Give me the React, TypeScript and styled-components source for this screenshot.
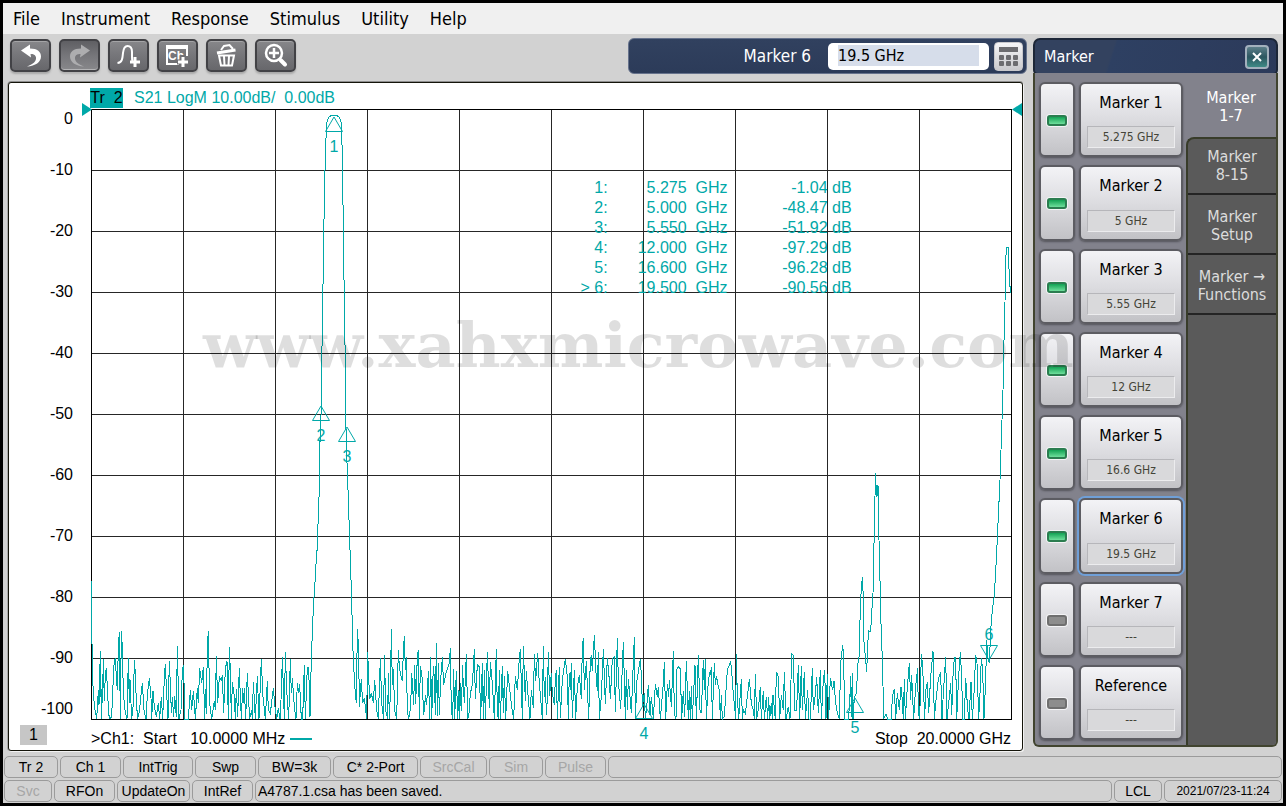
import React from "react";
import styled, { createGlobalStyle, css } from "styled-components";

const UI_FONT = '"DejaVu Sans Condensed", "Noto Sans", sans-serif';
const PLOT_FONT = '"Liberation Sans", Arial, sans-serif';
const TEAL = "#00a8a8";

const GlobalStyle = createGlobalStyle`
  *, *::before, *::after { box-sizing: border-box; }
  body { margin: 0; background: #d2d2d2; }
  button, input { font: inherit; color: inherit; margin: 0; }
`;

const Frame = styled.div`
  position: relative;
  display: flex;
  flex-direction: column;
  min-width: 1000px;
  min-height: 100vh;
  border: 3px solid #000;
  background: #d2d2d2;
  color: #000;
  font: 16px/20px ${UI_FONT};
`;

/* ---------- menu ---------- */

const MenuBar = styled.nav`
  display: flex;
  gap: 21px;
  height: 31px;
  padding: 0 10px;
  background: #f0f0f0;
`;

const MenuItem = styled.button`
  padding: 0;
  border: 0;
  background: none;
  font-size: 18px;
  line-height: 30px;
`;

/* ---------- layout ---------- */

const Main = styled.main`
  flex: 1;
  display: grid;
  grid-template-columns: minmax(0, 1fr) 245px;
  gap: 6px;
  padding: 4px 5px 0;
`;

const Workspace = styled.section`
  display: flex;
  flex-direction: column;
  gap: 8px;
`;

const TopRow = styled.div`
  display: flex;
  justify-content: space-between;
  height: 36px;
`;

const Tools = styled.div`
  display: flex;
  gap: 8px;
  padding: 1px 2px;
`;

const ToolButton = styled.button<{ $pressed?: boolean }>`
  width: 41px;
  height: 33px;
  padding: 0;
  border: 2px solid #424246;
  border-radius: 5px;
  background: linear-gradient(#87878a, #77777b 45%, #67676b);
  box-shadow: inset 0 1px 0 #a4a4a6, 0 2px 2px #a8a8a8;
  color: #fff;
  ${(p) =>
    p.$pressed &&
    css`
      background: linear-gradient(#5f5f63, #76767a 50%, #88888b);
      box-shadow: inset 0 -1px 0 #b4b4b6, 0 2px 2px #b4b4b4;
      color: #adadaf;
    `}
  svg {
    display: block;
    width: 37px;
    height: 29px;
  }
`;

const EntryBar = styled.div`
  display: flex;
  align-items: center;
  justify-content: flex-end;
  gap: 5px;
  width: 399px;
  padding-right: 3px;
  border: 1px solid #66728c;
  border-radius: 6px;
  background: linear-gradient(#31415f, #2c3b59);
  color: #fff;
`;

const EntryLabel = styled.label`
  padding-right: 12px;
  font-size: 17px;
`;

const EntryInput = styled.input`
  width: 161px;
  height: 27px;
  padding: 2px 10px 4px;
  border: 0;
  border-radius: 5px;
  background: linear-gradient(#d6ddea, #d6ddea) content-box, #fff;
  color: #000;
  outline: none;
`;

const KeypadButton = styled.button`
  width: 29px;
  height: 29px;
  padding: 0;
  border: 1px solid #c8c8cc;
  border-radius: 4px;
  background: linear-gradient(#f6f6f8, #c9c9cd);
  svg {
    display: block;
    width: 27px;
    height: 27px;
  }
`;

/* ---------- chart ---------- */

const ChartCard = styled.section`
  flex: 1;
  display: grid;
  grid-template: 26px minmax(0, 1fr) 31px / 82px minmax(0, 1fr) 11px;
  margin-right: 4px;
  border: 1px solid #14140a;
  border-radius: 3px;
  background: #fff;
  box-shadow: 0 -1px 0 #8e8e8e, -1px 0 0 #a8a8a8, 1px 1px 0 #f2f2f2;
  font: 16px/20px ${PLOT_FONT};
`;

const TraceHeader = styled.div`
  grid-column: 2 / 4;
  display: flex;
  align-items: center;
  gap: 11px;
  padding-top: 4px;
  color: ${TEAL};
  white-space: pre;
`;

const TraceTag = styled.span`
  width: 33px;
  margin-left: -1px;
  background: ${TEAL};
  color: #000;
  text-align: center;
`;

const YAxis = styled.div`
  grid-column: 1;
  display: grid;
  grid-template-rows: 1fr repeat(9, 2fr) 1fr;
  align-items: center;
  padding-right: 18px;
  text-align: right;
  span:first-child { align-self: start; }
  span:last-child { align-self: end; }
`;

const Plot = styled.div`
  position: relative;
  min-height: 400px;
`;

const PlotLayer = styled.svg`
  position: absolute;
  inset: 0;
  width: 100%;
  height: 100%;
  overflow: visible;
`;

const LevelArrow = styled.svg<{ $side: "left" | "right" }>`
  position: absolute;
  top: -6px;
  ${(p) => (p.$side === "left" ? "left: -9px;" : "right: -11px;")}
  width: 10px;
  height: 13px;
  fill: ${TEAL};
`;

const Pin = styled.div<{ $x: number; $y: number; $inverted?: boolean }>`
  position: absolute;
  left: ${(p) => (p.$x / 920) * 100}%;
  top: ${(p) => (p.$y / 610) * 100}%;
  display: flex;
  flex-direction: ${(p) => (p.$inverted ? "column-reverse" : "column")};
  align-items: center;
  gap: ${(p) => (p.$inverted ? 0 : 5)}px;
  transform: translate(-50%, ${(p) => (p.$inverted ? "-100%" : "0")});
  color: ${TEAL};
  svg {
    display: block;
    width: 19px;
    height: 16px;
    fill: none;
    stroke: ${TEAL};
  }
`;

const Readout = styled.table`
  position: absolute;
  top: 69px;
  left: 53%;
  border-collapse: collapse;
  color: ${TEAL};
  td {
    padding: 0;
    text-align: right;
    white-space: pre;
  }
  td:nth-child(1) { width: 29px; }
  td:nth-child(2) { width: 79px; }
  td:nth-child(3) { width: 41px; }
  td:nth-child(4) { width: 100px; }
  td:nth-child(5) { width: 24px; }
`;

const ChartFooter = styled.div`
  grid-column: 1 / 3;
  display: grid;
  grid-template-columns: 82px 1fr auto;
  align-items: center;
  padding-top: 8px;
  white-space: pre;
`;

const ChannelTag = styled.span`
  width: 27px;
  margin: -8px 0 0 11px;
  background: #c6c6c6;
  text-align: center;
`;

const StartText = styled.span`
  display: flex;
  align-items: center;
  gap: 5px;
`;

const TraceSwatch = styled.i`
  width: 22px;
  height: 2px;
  background: ${TEAL};
`;

/* ---------- marker panel ---------- */

const Panel = styled.aside`
  display: flex;
  flex-direction: column;
  margin-bottom: 4px;
`;

const PanelTitle = styled.header`
  display: flex;
  align-items: center;
  justify-content: space-between;
  height: 37px;
  padding: 0 7px 0 9px;
  border: 2px solid #1d2738;
  border-radius: 7px 7px 5px 5px;
  background: linear-gradient(108deg, #33425f 32%, #2e4062 33%, #2c3a5a);
  color: #fff;
`;

const CloseButton = styled.button`
  display: grid;
  place-items: center;
  width: 24px;
  height: 24px;
  padding: 0;
  border: 2px solid #a3b0bd;
  border-radius: 4px;
  background: linear-gradient(#5d7f8a, #2c5660 50%, #3f8a86);
  svg {
    width: 12px;
    height: 12px;
    stroke: #fff;
    stroke-width: 2;
  }
`;

const PanelBody = styled.div`
  flex: 1;
  display: grid;
  grid-template-columns: minmax(0, 1fr) 90px;
  margin-top: -2px;
  border: 2px solid #41442f;
  border-top: 0;
  border-radius: 0 0 6px 6px;
  background: #82828c;
`;

const MarkerList = styled.div`
  display: grid;
  grid-auto-rows: 1fr;
  gap: 8px;
  padding: 9px 3px 5px 4px;
`;

const MarkerRow = styled.div`
  display: grid;
  grid-template-columns: 36px minmax(0, 1fr);
  gap: 4px;
`;

const Key = styled.button<{ $active?: boolean }>`
  display: flex;
  flex-direction: column;
  align-items: center;
  justify-content: space-between;
  padding: 9px 6px 7px;
  border: 2px solid #5c5c62;
  border-radius: 6px;
  background: linear-gradient(#f3f3f6, #dcdce0 50%, #c2c2c6);
  box-shadow: ${(p) => (p.$active ? "0 0 0 2px #6f9fd8, " : "")}
    0 1px 2px #55555c;
`;

const Led = styled.i<{ $on: boolean }>`
  width: 20px;
  height: 11px;
  margin: auto;
  border: 2px solid ${(p) => (p.$on ? "#2b7d50" : "#6f6f6f")};
  border-radius: 3px;
  background: ${(p) =>
    p.$on ? "linear-gradient(#12a254, #6fdf9c)" : "#8d8d8d"};
  box-shadow: 0 0 0 1px #f4f4f6;
`;

const KeyValue = styled.span`
  width: 88px;
  height: 22px;
  border: 1px solid #b6b6ba;
  border-right-color: #ececee;
  border-bottom-color: #ececee;
  background: #d9d9db;
  color: #444438;
  font-size: 12px;
  line-height: 20px;
  text-align: center;
`;

const Tabs = styled.div`
  display: flex;
  flex-direction: column;
`;

const Tab = styled.button<{ $current?: boolean }>`
  height: ${(p) => (p.$current ? 64 : 60)}px;
  padding: 4px 0 0;
  border: 0;
  border-bottom: ${(p) => (p.$current ? "0" : "2px solid #242424")};
  background: none;
  color: ${(p) => (p.$current ? "#fff" : "inherit")};
  line-height: 18px;
  white-space: pre-line;
`;

const TabStack = styled.div`
  flex: 1;
  display: flex;
  flex-direction: column;
  border-top: 2px solid #383c2a;
  border-left: 2px solid #383c2a;
  border-radius: 8px 0 4px 0;
  background: #5a5a5a;
  color: #dcdcdc;
  ${Tab}:first-child {
    height: 56px;
    padding-top: 0;
  }
`;

/* ---------- status bars ---------- */

const StatusArea = styled.footer`
  display: grid;
  gap: 2px;
  padding: 5px 1px 1px;
  font: 14px/20px ${PLOT_FONT};
`;

const StatusRow = styled.div`
  display: flex;
  gap: 2px;
`;

const StatusCell = styled.span<{
  $w?: number;
  $off?: boolean;
  $start?: boolean;
  $small?: boolean;
}>`
  ${(p) => (p.$w ? `width: ${p.$w}px;` : "flex: 1;")}
  height: 22px;
  padding: 0 2px;
  border: 1px solid #9b9b9b;
  border-radius: 5px;
  color: ${(p) => (p.$off ? "#a6a6a6" : "#000")};
  font-size: ${(p) => (p.$small ? 12 : 14)}px;
  text-align: ${(p) => (p.$start ? "left" : "center")};
  white-space: nowrap;
`;

const Watermark = styled.div`
  position: absolute;
  top: 310px;
  left: 200px;
  color: rgba(0, 0, 0, 0.13);
  font: bold 62px/66px "DejaVu Serif", serif;
  pointer-events: none;
`;

/* ---------- data ---------- */

const markers = [
  { name: "Marker 1", value: "5.275 GHz", on: true },
  { name: "Marker 2", value: "5 GHz", on: true },
  { name: "Marker 3", value: "5.55 GHz", on: true },
  { name: "Marker 4", value: "12 GHz", on: true },
  { name: "Marker 5", value: "16.6 GHz", on: true },
  { name: "Marker 6", value: "19.5 GHz", on: true, active: true },
  { name: "Marker 7", value: "---", on: false },
  { name: "Reference", value: "---", on: false },
];

const readings = [
  ["1:", "5.275", "-1.04"],
  ["2:", "5.000", "-48.47"],
  ["3:", "5.550", "-51.92"],
  ["4:", "12.000", "-97.29"],
  ["5:", "16.600", "-96.28"],
  ["> 6:", "19.500", "-90.56"],
];

const pins = [
  { n: 1, x: 243, y: 7 },
  { n: 2, x: 230, y: 296 },
  { n: 3, x: 256, y: 317 },
  { n: 4, x: 553, y: 594 },
  { n: 5, x: 764, y: 588 },
  { n: 6, x: 898, y: 552, inverted: true },
];

/* Sweep samples, three units per plot pixel; each block has its own origin. */
const SWEEP: { dx: number; dy: number; pts: string }[] = [
  {
    dx: -33,
    dy: 1353,
    pts: `34,62 35,192 38,360 41,412 44,444 50,478 55,390 57,434 59,354 61,273 64,478 67,342 68,430 70,297 73,422 76,345 79,324 82,380 85,444 88,478 94,472 97,430 100,350 103,300 106,297 109,350 112,390 115,262 118,216 121,478 124,213 127,262 130,400 135,450 141,478 145,294 148,430 150,358 155,478 160,434 163,300 166,340 169,425 173,478 178,455 184,395 187,370 192,450 198,478 202,405 208,354 213,415 215,478 219,393 223,440 229,470 235,430 239,478 244,411 248,478 253,354 256,312 260,400 264,478 268,304 272,393 274,460 277,411 281,470 284,408 289,472 292,258 297,478 303,450 307,333 310,315 313,396 315,478 325,478 331,390 335,450 340,393 346,478 352,384 355,430 359,324 365,370 370,321 374,478 377,387 379,463 382,262 385,213 389,430 395,478 403,423 406,450 409,288 413,430 418,350 424,360 427,345 431,458 436,325 441,304 445,478 448,261 451,330 454,478 457,366 463,410 466,478 469,387 473,470 478,324 482,440 485,478 487,384 490,430 493,384 497,478 502,339 506,420 509,478 515,450 517,478 520,366 523,418 526,478 532,348 537,478 544,297 548,400 556,478 562,363 565,450 571,460 580,384 585,440 590,478 595,444 600,478 604,400 607,291 610,384 613,478 616,276 620,390 626,478 631,297 634,400 637,354 643,440 648,478 652,369 656,400 659,373 664,478 668,478 673,315 676,478 682,321 686,321 690,470 694,295 698,192 701,123 704,92 707,18 710,0`,
  },
  {
    dx: 567,
    dy: -87,
    pts: `119,1200 119,1120 122,1020 125,980 125,858 128,684 131,477 134,306 137,198 140,130 146,112 156,105 168,105 178,112 184,130 187,225 190,444 193,672 196,855 197,1007 200,1120 203,1200`,
  },
  {
    dx: -33,
    dy: 1353,
    pts: `811,0 812,33 815,112 817,212 820,300 823,354 826,402 829,430 832,207 836,268 838,440 844,357 848,430 853,415 857,450 860,478 863,276 866,350 869,418 874,400 880,428 884,360 890,450 895,478 901,294 905,430 911,478 913,285 918,455 923,478 925,340 928,478 931,400 934,207 937,375 940,327 944,450 950,478 955,270 958,320`,
  },
  {
    dx: 867,
    dy: 1473,
    pts: `62,225 67,244 70,153 73,108 76,210 79,172 82,330 86,357 92,320 95,219 98,265 101,315 104,195 107,312 112,170 115,150 118,357 121,198 126,230 131,345 137,285 140,316 145,213 149,357 152,171 155,357 160,198 163,234 166,345 169,129 172,348 175,189 178,345 182,240 187,172 191,256 197,222 203,205 208,190 211,144 214,330 218,357 221,207 224,357 229,213 233,357 237,270 239,357 242,250 245,333 247,195 253,310 259,162 263,357 267,340 271,280 277,255 283,147 286,297 292,195 298,200 302,357 307,189 310,357 313,210 316,357 322,156 328,325 331,186 337,250 343,357 349,147 352,335 355,357 358,210 361,357 367,198 370,340 373,228 377,357 383,213 389,265 395,320 401,357 406,228 412,270 418,175 421,147 427,357 430,138 436,303 439,213 445,298 450,357 454,270 460,323 463,162 467,243 473,159 478,250 484,320 487,357 490,138 493,290 496,230 499,345 502,298 505,156 509,288 514,219 517,280 523,315 526,237 529,210 532,357 538,201 541,353 547,240 556,177 562,230 565,357 568,218 571,270 574,189 577,353 583,210 587,357 592,260 598,225 604,298 607,140 610,114 613,270 619,183 626,357 631,180 634,165 637,213 643,105 649,240 652,272 655,156 658,357 664,290 670,147 676,312 682,174 688,240 691,298 697,177 703,170 706,337 712,114 715,240 722,328 730,126 736,357 739,210 742,330 745,237 751,300 754,340 760,186 763,111 766,357 771,240 781,177 785,240 787,320 793,280 796,357 801,310 805,255 810,345 814,290 820,357 826,252 832,290 835,262 841,357 845,310 850,250 853,186 857,357 862,252 866,290 868,240 874,320 880,153 883,340 888,357 889,210 895,200 901,207 905,357 910,273 914,350 919,183 925,357 928,273 931,357 934,258 937,357 945,195 949,357 955,165 960,330 964,340 970,180 973,270 976,177 979,357 985,240 989,220`,
  },
  {
    dx: 1827,
    dy: 1353,
    pts: `31,345 34,321 37,478 43,309 46,375 49,348 54,374 58,390 61,478 64,405 67,478 73,470 78,390 82,330 86,320 92,304 97,360 100,405 104,440 107,478 109,282 112,410 116,478 121,400 124,357 127,478 130,450 136,460 142,410 148,357 154,430 160,450 163,478 166,342 170,478 176,440 181,380 184,478 190,393 193,478 199,411 203,478 206,411 209,478 214,430 217,478 219,405 226,478 229,336 235,350 239,478 244,405 250,450 253,336 258,478 265,440 270,478 275,282 280,285 284,450 290,450 295,315 299,478 304,318 307,450 313,336 316,478 323,390 327,478 331,478 337,324 340,450 346,405 350,350 355,460 361,330 364,478 370,360 374,330 378,478 382,342 386,478 391,354 398,390 402,363 407,430 412,460 418,478 422,310 428,255 431,290 433,420 434,478 445,478 449,430 452,348 454,470 457,339 459,478 463,412 469,400 475,293 478,290 481,130 487,51 491,130 491,235 497,300 500,337 503,255 506,212 512,215 515,160 519,100 521,0 525,-190 526,-261 528,-225 531,-190 534,-225 537,-60 538,0 541,92 544,240 547,290 549,378 551,478 558,463 563,478 574,478 577,410 583,387 587,478 592,400 598,450 603,380 606,411 610,478 613,357 616,478 622,380 628,309 632,420 635,345 641,478 647,378 653,325 655,460 659,478 664,282 668,320 674,478 677,393 682,366 686,460 692,350 699,273 703,478 708,420 715,357 722,336 726,478 730,400 737,292 741,478 748,411 752,370 755,465 760,320 764,293 767,293 770,478 776,350 781,276 785,350 788,478 793,478 797,354 803,450 807,478 813,366 817,478 822,400 827,285 831,310 836,478 840,400 844,293 848,330 852,478 857,360 860,240 863,290 868,310 871,240 874,180 880,125 883,110 886,50 889,0 900,-240 909,-510 911,-621 915,-771 916,-888 920,-939 924,-939 929,-831 932,-801`,
  },
];

const tracePoints = SWEEP.map(({ dx, dy, pts }) =>
  pts
    .split(" ")
    .map((pair) => {
      const [x, y] = pair.split(",").map(Number);
      return `${x + dx},${Math.min(1830, y + dy)}`;
    })
    .join(" ")
).join(" ");

const tens = [0, 1, 2, 3, 4, 5, 6, 7, 8, 9, 10];

/* ---------- icons ---------- */

const UndoShape = () => (
  <path
    fill="currentColor"
    d="M9 9.500 18 3.500V7.500C25.500 7.500 29 11 29 15.500 29 21 23.500 25 15 25.500 21.500 23 24.500 20 24 16.500 23.500 13.500 21 13 18.500 13L19 16.500Z"
  />
);

const UndoIcon = () => (
  <svg viewBox="0 0 37 29"><UndoShape /></svg>
);

const RedoIcon = () => (
  <svg viewBox="0 0 37 29">
    <g transform="translate(38 0) scale(-1 1)"><UndoShape /></g>
  </svg>
);

const AddTraceIcon = () => (
  <svg viewBox="0 0 37 29" fill="none" stroke="currentColor">
    <path strokeWidth="2" d="M7.500 22C12 21.500 12.500 18 13 12 13.500 7 15 5 17.500 5S22 7 22 11V16C22 17.500 22 19 22.500 20" />
    <path strokeWidth="3" d="M25 16V26M20 21H30" />
  </svg>
);

const AddChannelIcon = () => (
  <svg viewBox="0 0 37 29">
    <path fill="none" stroke="#fff" strokeWidth="2" d="M20 23H8V5H28V15" />
    <path fill="#fff" d="M7 4H29V8H7Z" />
    <text x="9" y="19" fill="#fff" fontFamily="Liberation Sans" fontWeight="bold" fontSize="12">Ch</text>
    <path stroke="#717175" strokeWidth="5" d="M24 14V26M18 21H30" />
    <path stroke="#fff" strokeWidth="3" d="M24 16V26M19 21H29" />
  </svg>
);

const TrashIcon = () => (
  <svg viewBox="0 0 37 29" fill="none" stroke="#fff">
    <path strokeWidth="3" d="M9 12 27.500 9" />
    <path strokeWidth="2" d="M13 9 16 5 21.500 4 25 8" />
    <path strokeWidth="2" d="M11 14.500 13 24.500H24L26 14.500ZM16 15 16.500 24M21 15 20.500 24" />
  </svg>
);

const ZoomIcon = () => (
  <svg viewBox="0 0 37 29" fill="none" stroke="#fff">
    <circle cx="17" cy="12" r="8" strokeWidth="2.500" />
    <path strokeWidth="2.500" d="M17 7V17M12 12H22" />
    <path strokeWidth="4" strokeLinecap="round" d="M23.500 19 28 23.500" />
  </svg>
);

const tools = [
  { label: "Undo", icon: <UndoIcon /> },
  { label: "Redo", icon: <RedoIcon />, pressed: true },
  { label: "Add trace", icon: <AddTraceIcon /> },
  { label: "Add channel", icon: <AddChannelIcon /> },
  { label: "Delete", icon: <TrashIcon /> },
  { label: "Zoom", icon: <ZoomIcon /> },
];

const KeypadIcon = () => (
  <svg viewBox="0 0 27 27" fill="#6c6c70">
    <rect x="4" y="4" width="19" height="5" />
    {[4, 11, 18].map((x) =>
      [12, 18].map((y) => (
        <rect key={`${x}-${y}`} x={x} y={y} width="5" height="5" rx="1" />
      ))
    )}
  </svg>
);

/* ---------- page ---------- */

function Chart() {
  return (
    <ChartCard>
      <TraceHeader>
        <TraceTag>Tr  2</TraceTag>
        <span>S21 LogM 10.00dB/  0.00dB</span>
      </TraceHeader>
      <YAxis>
        {tens.map((n) => (
          <span key={n}>{n === 0 ? "0" : `-${n * 10}`}</span>
        ))}
      </YAxis>
      <Plot>
        <PlotLayer shapeRendering="crispEdges" stroke="#262626">
          {tens.slice(1, 10).map((n) => (
            <React.Fragment key={n}>
              <line x1={`${n * 10}%`} x2={`${n * 10}%`} y1="0" y2="100%" />
              <line y1={`${n * 10}%`} y2={`${n * 10}%`} x1="0" x2="100%" />
            </React.Fragment>
          ))}
          <rect width="100%" height="100%" fill="none" stroke="#000" />
        </PlotLayer>
        <PlotLayer viewBox="0 0 2760 1830" preserveAspectRatio="none" shapeRendering="crispEdges">
          <polyline
            points={tracePoints}
            fill="none"
            stroke={TEAL}
            vectorEffect="non-scaling-stroke"
          />
        </PlotLayer>
        <LevelArrow $side="left" viewBox="0 0 10 13"><path d="M0 0 10 6.500 0 13Z" /></LevelArrow>
        <LevelArrow $side="right" viewBox="0 0 10 13"><path d="M10 0 0 6.500 10 13Z" /></LevelArrow>
        {pins.map((p) => (
          <Pin key={p.n} $x={p.x} $y={p.y} $inverted={p.inverted}>
            <svg viewBox="0 0 19 16">
              <path d={p.inverted ? "M1 .5H18L9.500 15Z" : "M1 15.500H18L9.500 1Z"} />
            </svg>
            <span>{p.n}</span>
          </Pin>
        ))}
        <Readout>
          <tbody>
            {readings.map(([id, freq, level]) => (
              <tr key={id}>
                <td>{id}</td>
                <td>{freq}</td>
                <td>GHz</td>
                <td>{level}</td>
                <td>dB</td>
              </tr>
            ))}
          </tbody>
        </Readout>
      </Plot>
      <ChartFooter>
        <ChannelTag>1</ChannelTag>
        <StartText>
          {">Ch1:  Start   10.0000 MHz"}
          <TraceSwatch />
        </StartText>
        <span>Stop  20.0000 GHz</span>
      </ChartFooter>
    </ChartCard>
  );
}

function MarkerPanel() {
  return (
    <Panel>
      <PanelTitle>
        Marker
        <CloseButton aria-label="Close">
          <svg viewBox="0 0 12 12"><path d="M2 2 10 10M10 2 2 10" /></svg>
        </CloseButton>
      </PanelTitle>
      <PanelBody>
        <MarkerList>
          {markers.map((m) => (
            <MarkerRow key={m.name}>
              <Key aria-label={`${m.name} on`} aria-pressed={m.on}>
                <Led $on={m.on} />
              </Key>
              <Key $active={m.active}>
                {m.name}
                <KeyValue>{m.value}</KeyValue>
              </Key>
            </MarkerRow>
          ))}
        </MarkerList>
        <Tabs role="tablist">
          <Tab role="tab" aria-selected $current>{"Marker\n1-7"}</Tab>
          <TabStack>
            <Tab role="tab">{"Marker\n8-15"}</Tab>
            <Tab role="tab">{"Marker\nSetup"}</Tab>
            <Tab role="tab">{"Marker →\nFunctions"}</Tab>
          </TabStack>
        </Tabs>
      </PanelBody>
    </Panel>
  );
}

export default function App() {
  return (
    <>
      <GlobalStyle />
      <Frame>
        <MenuBar>
          {["File", "Instrument", "Response", "Stimulus", "Utility", "Help"].map((m) => (
            <MenuItem key={m}>{m}</MenuItem>
          ))}
        </MenuBar>
        <Main>
          <Workspace>
            <TopRow>
              <Tools>
                {tools.map((t) => (
                  <ToolButton key={t.label} aria-label={t.label} $pressed={t.pressed}>
                    {t.icon}
                  </ToolButton>
                ))}
              </Tools>
              <EntryBar>
                <EntryLabel htmlFor="entry">Marker 6</EntryLabel>
                <EntryInput id="entry" defaultValue="19.5 GHz" />
                <KeypadButton aria-label="Keypad"><KeypadIcon /></KeypadButton>
              </EntryBar>
            </TopRow>
            <Chart />
          </Workspace>
          <MarkerPanel />
        </Main>
        <StatusArea>
          <StatusRow>
            <StatusCell $w={54}>Tr 2</StatusCell>
            <StatusCell $w={61}>Ch 1</StatusCell>
            <StatusCell $w={70}>IntTrig</StatusCell>
            <StatusCell $w={61}>Swp</StatusCell>
            <StatusCell $w={73}>BW=3k</StatusCell>
            <StatusCell $w={85}>C* 2-Port</StatusCell>
            <StatusCell $w={67} $off>SrcCal</StatusCell>
            <StatusCell $w={54} $off>Sim</StatusCell>
            <StatusCell $w={61} $off>Pulse</StatusCell>
            <StatusCell />
          </StatusRow>
          <StatusRow>
            <StatusCell $w={48} $off>Svc</StatusCell>
            <StatusCell $w={61}>RFOn</StatusCell>
            <StatusCell $w={73}>UpdateOn</StatusCell>
            <StatusCell $w={61}>IntRef</StatusCell>
            <StatusCell $start>A4787.1.csa has been saved.</StatusCell>
            <StatusCell $w={48}>LCL</StatusCell>
            <StatusCell $w={118} $small>2021/07/23-11:24</StatusCell>
          </StatusRow>
        </StatusArea>
        <Watermark>www.xahxmicrowave.com</Watermark>
      </Frame>
    </>
  );
}
